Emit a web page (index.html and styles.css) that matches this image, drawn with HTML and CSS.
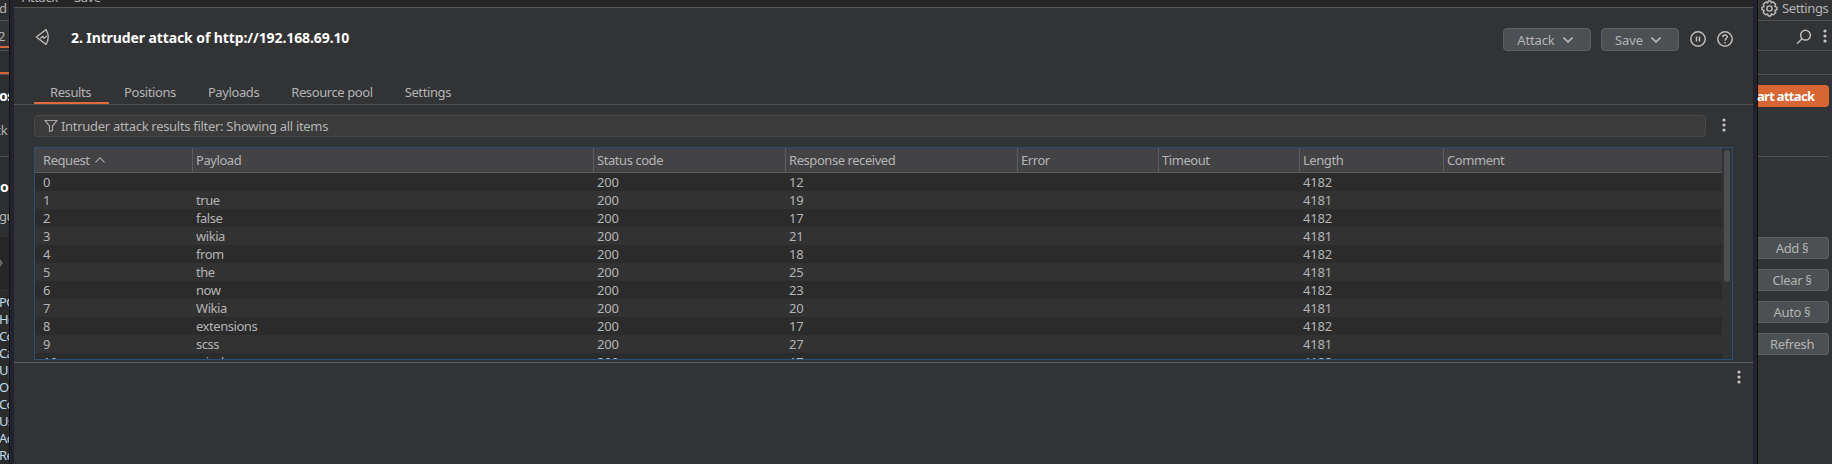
FILE: index.html
```html
<!DOCTYPE html>
<html lang="en">
<head>
<meta charset="utf-8">
<title>Intruder attack</title>
<link rel="stylesheet" href="styles.css">
</head>
<body>
<div class="desktop">
  <aside class="back-left">
    <div class="bl-top">d</div>
    <div class="bl-tab">2</div>
    <div class="bl-subtab"></div>
    <div class="bl-title">os</div>
    <div class="bl-text">ck</div>
    <div class="bl-heading">o</div>
    <div class="bl-hint">gu</div>
    <div class="bl-target"><svg width="3" height="8" viewBox="0 0 3 8"><path d="M0 0L3 4L0 8Z" fill="#666"/></svg></div>
    <div class="bl-code">
      <span>PO</span><span>Ho</span><span>Co</span><span>Ca</span><span>Up</span><span>O</span><span>Co</span><span>Us</span><span>Ac</span><span>Re</span>
    </div>
  </aside>
  <div class="edge edge-left"></div>
  <main class="window">
    <nav class="menubar"><span>Attack</span><span>Save</span></nav>
    <header class="header">
      <svg class="logo" width="16" height="18" viewBox="0 0 16 18" fill="none" stroke="#b6b6b6" stroke-width="1.4" stroke-linejoin="round" stroke-linecap="round"><path d="M1.300 9L11 1.600Q15.500 9 11 16.400Z"/><path d="M5.500 10L8 8.300L8.700 10.200L11.500 8.200"/></svg>
      <h1 class="title">2. Intruder attack of http://192.168.69.10</h1>
      <div class="actions">
        <button class="btn attack">Attack <svg width="10" height="6" viewBox="0 0 10 6"><path d="M.5.6L5 5L9.500.6" fill="none" stroke="#bbb" stroke-width="1.600"/></svg></button>
        <button class="btn save">Save <svg width="10" height="6" viewBox="0 0 10 6"><path d="M.5.6L5 5L9.500.6" fill="none" stroke="#bbb" stroke-width="1.600"/></svg></button>
        <svg class="round" width="16" height="16" viewBox="0 0 16 16" fill="none" stroke="#bebebe"><circle cx="8" cy="8" r="7.200" stroke-width="1.500"/><path d="M6.500 5.500V10.500M9.500 5.500V10.500" stroke-width="1.500"/></svg>
        <svg class="round help" width="16" height="16" viewBox="0 0 16 16" fill="none" stroke="#bebebe" stroke-width="1.500"><circle cx="8" cy="8" r="7.200"/><path d="M5.800 6.300C5.800 3.300 10.300 3.300 10.300 6.100C10.300 7.700 8 7.700 8 9.700M8 11V12.500"/></svg>
      </div>
    </header>
    <div class="tabs"><span class="tab active">Results</span><span class="tab">Positions</span><span class="tab">Payloads</span><span class="tab">Resource pool</span><span class="tab">Settings</span></div>
    <div class="filter-row">
      <div class="filter"><svg width="14" height="14" viewBox="0 0 14 14"><path d="M1 1.500H13L8.500 7V11.500L5.500 12.500V7Z" fill="none" stroke="#a4a4a4" stroke-width="1.200"/></svg><span>Intruder attack results filter: Showing all items</span></div>
      <svg class="dots" width="4" height="14" viewBox="0 0 4 14" fill="#c6c6c6"><circle cx="2" cy="2" r="1.600"/><circle cx="2" cy="7" r="1.600"/><circle cx="2" cy="12" r="1.600"/></svg>
    </div>
    <section class="table">
      <div class="grid">
        <div class="row head"><span>Request <svg width="10" height="6" viewBox="0 0 10 6"><path d="M.5 5.300L5 .8L9.500 5.300" fill="none" stroke="#aaa" stroke-width="1.100"/></svg></span><span>Payload</span><span>Status code</span><span>Response received</span><span>Error</span><span>Timeout</span><span>Length</span><span>Comment</span></div>
        <div class="row"><span>0</span><span></span><span>200</span><span>12</span><span></span><span></span><span>4182</span><span></span></div>
        <div class="row"><span>1</span><span class="word">true</span><span>200</span><span>19</span><span></span><span></span><span>4181</span><span></span></div>
        <div class="row"><span>2</span><span class="word">false</span><span>200</span><span>17</span><span></span><span></span><span>4182</span><span></span></div>
        <div class="row"><span>3</span><span class="word">wikia</span><span>200</span><span>21</span><span></span><span></span><span>4181</span><span></span></div>
        <div class="row"><span>4</span><span class="word">from</span><span>200</span><span>18</span><span></span><span></span><span>4182</span><span></span></div>
        <div class="row"><span>5</span><span class="word">the</span><span>200</span><span>25</span><span></span><span></span><span>4181</span><span></span></div>
        <div class="row"><span>6</span><span class="word">now</span><span>200</span><span>23</span><span></span><span></span><span>4182</span><span></span></div>
        <div class="row"><span>7</span><span class="word">Wikia</span><span>200</span><span>20</span><span></span><span></span><span>4181</span><span></span></div>
        <div class="row"><span>8</span><span class="word">extensions</span><span>200</span><span>17</span><span></span><span></span><span>4182</span><span></span></div>
        <div class="row"><span>9</span><span class="word">scss</span><span>200</span><span>27</span><span></span><span></span><span>4181</span><span></span></div>
        <div class="row"><span>10</span><span class="word">window</span><span>200</span><span>17</span><span></span><span></span><span>4182</span><span></span></div>
      </div>
      <div class="scroll"><div class="thumb"></div></div>
    </section>
    <section class="lower"><svg class="dots" width="4" height="14" viewBox="0 0 4 14" fill="#c6c6c6"><circle cx="2" cy="2" r="1.600"/><circle cx="2" cy="7" r="1.600"/><circle cx="2" cy="12" r="1.600"/></svg></section>
  </main>
  <div class="edge edge-right"></div>
  <aside class="back-right">
    <div class="br-settings"><svg width="17" height="17" viewBox="0 0 17 17" fill="none" stroke="#bebebe" stroke-width="1.400"><path stroke-linejoin="round" d="M6.700 2.900L7.300 1H9.700L10.300 2.900L12.200 1.900L14.600 4.300L13.800 6.400L16 7.300V9.700L13.900 10.500L14.700 12.600L12.400 14.800L10.400 13.900L9.700 16H7.300L6.600 13.900L4.600 14.800L2.300 12.600L3.100 10.500L1 9.700V7.300L3.100 6.500L2.300 4.300L4.700 2Z"/><circle cx="8.500" cy="8.500" r="2.600"/></svg><span>Settings</span></div>
    <div class="br-search"><svg width="16" height="16" viewBox="0 0 16 16" fill="none" stroke="#bebebe" stroke-width="1.500"><circle cx="9.500" cy="6.200" r="4.900"/><path d="M6 9.800L1 14.800"/></svg><svg class="dots" width="4" height="14" viewBox="0 0 4 14" fill="#c6c6c6"><circle cx="2" cy="2" r="1.600"/><circle cx="2" cy="7" r="1.600"/><circle cx="2" cy="12" r="1.600"/></svg></div>
    <div class="br-band"></div>
    <div class="br-start"><button class="start">art attack</button></div>
    <div class="br-buttons"><button class="btn">Add §</button><button class="btn">Clear §</button><button class="btn">Auto §</button><button class="btn">Refresh</button></div>
  </aside>
</div>
</body>
</html>
```

FILE: styles.css
```css
* { box-sizing: border-box; }
body { margin: 0; background: #323335; color: #b4b4b4; font: 13px/18px "Noto Sans", sans-serif; letter-spacing: -.38px; overflow: hidden; }
svg { flex: none; display: block; }
button { font: inherit; color: inherit; margin: 0; padding: 0; letter-spacing: inherit; }
.desktop { display: flex; width: 1832px; height: 464px; overflow: hidden; white-space: nowrap; }

.back-left { width: 9px; flex: none; overflow: hidden; background: #2d2e30; display: flex; flex-direction: column; }
.back-left > div { flex: none; overflow: hidden; }
.bl-top { height: 21px; line-height: 17px; border-bottom: 1px solid #515151; text-indent: -1px; }
.bl-tab { height: 27px; background: #333436; border-bottom: 2px solid #d96532; line-height: 31px; text-indent: -2px; }
.bl-subtab { height: 24px; margin-top: 2px; border-top: 1px solid #515151; border-bottom: 2px solid #d96532; }
.bl-title { height: 47px; border-top: 1px solid #515151; padding-top: 12px; color: #fff; font-weight: 700; font-size: 14px; text-indent: -1px; }
.bl-text { height: 36px; border-bottom: 1px solid #515151; text-indent: -5px; }
.bl-heading { height: 50px; padding-top: 21px; color: #fff; font-weight: 700; font-size: 14px; }
.bl-hint { height: 30px; text-indent: -1px; }
.bl-target { height: 52px; padding-top: 22px; background: #262626; }
.bl-code { height: 175px; margin-top: 3px; padding-top: 2px; background: #2b2b2b; color: #c0dbe6; line-height: 17px; display: flex; flex-direction: column; letter-spacing: -.6px; text-indent: -1px; }

.edge { width: 5px; background: #23232f; flex: none; }
.edge-left { border-left: 1px solid #111; }
.edge-right { border-right: 1px solid #111; }

.window { width: 1739px; flex: none; background: #323335; display: flex; flex-direction: column; }
.menubar { height: 8px; flex: none; overflow: hidden; background: #252525; border-bottom: 1px solid #565656; display: flex; gap: 16px; padding-left: 8px; line-height: 18px; }
.menubar span { margin-top: -12px; }
.header { height: 72px; flex: none; display: flex; padding: 20px 20px 0 21px; }
.title { margin: 0 0 0 20px; color: #fff; font-size: 14px; line-height: 20px; font-weight: 700; letter-spacing: -.1px; }
.actions { margin-left: auto; display: flex; }
.btn { height: 23px; border: 1px solid #5e6162; border-radius: 4px; background: #4c5052; display: flex; align-items: center; justify-content: center; gap: 8px; letter-spacing: -.15px; }
.attack { width: 88px; padding-right: 4px; }
.save { width: 78px; margin-left: 10px; padding-right: 4px; }
.round { margin: 3px 0 0 11px; }

.tabs { height: 25px; flex: none; display: flex; border-bottom: 1px solid #515151; padding-left: 20px; }
.tab { padding: 3px 16px 0; letter-spacing: -.4px; }
.tab.active { width: 75px; padding: 3px 0 0 16px; margin-right: -1px; border-bottom: 2px solid #e0693a; }
.filter-row { display: flex; margin: 10px 0 0 20px; height: 22px; flex: none; }
.filter { width: 1672px; display: flex; align-items: center; gap: 3px; padding-left: 9px; border: 1px solid #484848; border-radius: 4px; background: #3b3b3b; letter-spacing: -.3px; }
.filter-row .dots { margin: 3px 0 0 16px; }

.table { height: 213px; width: 1699px; margin: 10px 0 0 20px; flex: none; border: 1px solid #2c4f74; display: flex; overflow: hidden; }
.grid { width: 1687px; overflow: hidden; }
.row { display: grid; grid-template-columns: 158px 401px 192px 232px 141px 141px 144px 1fr; height: 18px; background: #2b2b2b; letter-spacing: -.2px; }
.row:nth-child(odd) { background: #323232; }
.row span { padding-left: 3px; }
.row span:first-child { padding-left: 8px; }
.row .word { letter-spacing: -.45px; }
.row.head { height: 25px; background: #434345; border-bottom: 1px solid #5d5d5d; line-height: 24px; letter-spacing: -.44px; }
.head span { border-right: 1px solid #5d5d5d; }
.head span:first-child { display: flex; align-items: center; gap: 5px; }
.head span:last-child { border-right: 0; }
.scroll { width: 10px; padding: 2px; }
.thumb { width: 6px; height: 132px; border-radius: 3px; background: #4d4e4f; }
.row:nth-child(even) { background: #2b2b2b; }
.lower { height: 102px; margin-top: 2px; border-top: 1px solid #5e5e5e; padding: 7px 0 0 1723px; }

.back-right { width: 74px; flex: none; display: flex; flex-direction: column; background: #323335; }
.br-settings { height: 21px; border-bottom: 1px solid #515151; display: flex; gap: 4px; padding-left: 3px; line-height: 17px; }
.br-search { height: 30px; border-bottom: 1px solid #515151; display: flex; padding: 8px 0 0 38px; gap: 11px; }
.br-band { height: 24px; border-bottom: 1px solid #515151; }
.br-start { height: 82px; width: 71px; border-bottom: 1px solid #515151; padding-top: 10px; }
.start { display: block; width: 71px; height: 22px; border: 0; border-radius: 0 4px 4px 0; background: #d96532; color: #fff; font-weight: 700; text-align: left; text-indent: -1px; letter-spacing: -.7px; }
.br-buttons { display: flex; flex-direction: column; gap: 10px; padding-top: 80px; width: 71px; }
.br-buttons .btn { height: 22px; border-left: 0; border-radius: 0 4px 4px 0; letter-spacing: -.35px; padding-right: 2px; }
```
